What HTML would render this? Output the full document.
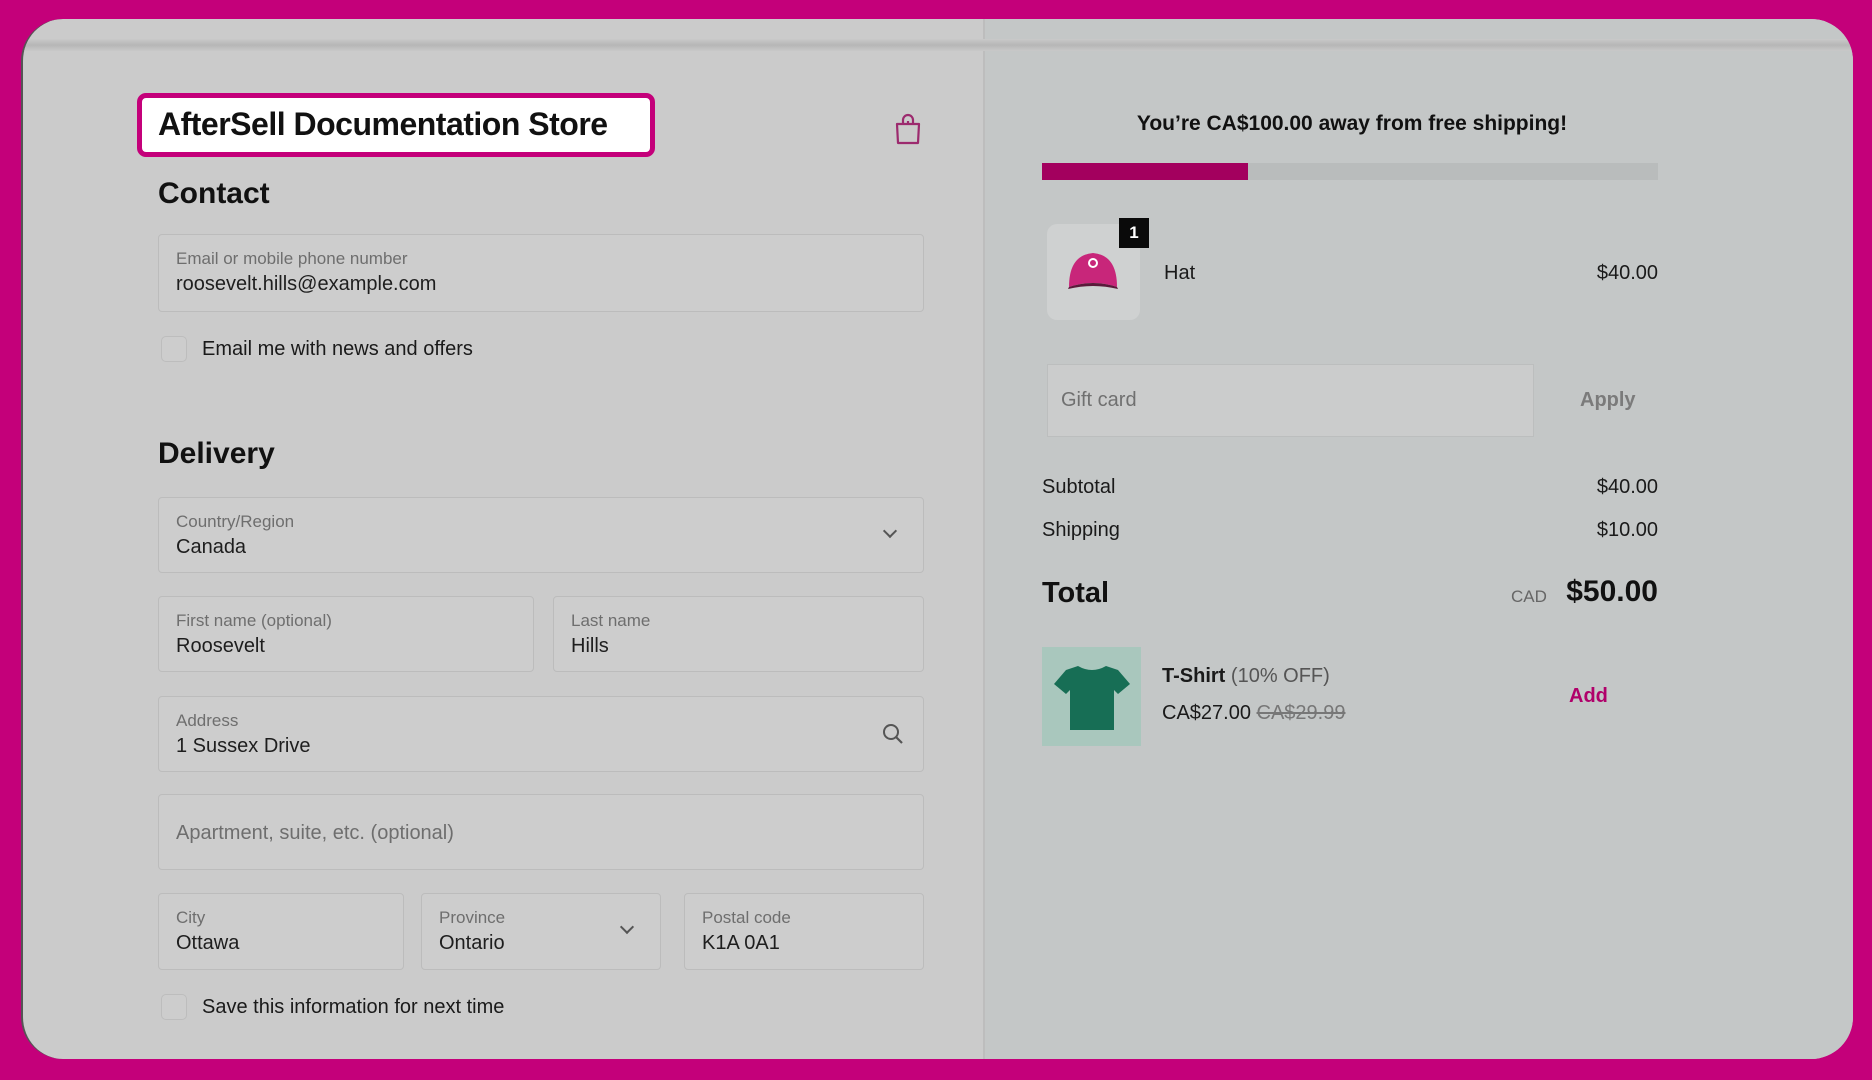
<!DOCTYPE html>
<html><head><meta charset="utf-8"><style>
*{box-sizing:border-box;margin:0;padding:0}
body{width:1872px;height:1080px;background:#c4007a;font-family:"Liberation Sans",sans-serif;position:relative;overflow:hidden;color:#1a1a1a}
.card{position:absolute;left:21px;top:19px;width:1832px;height:1040px;border-radius:42px;background:#cbcbcb;overflow:hidden;border-left:2px solid #555}
.right{position:absolute;left:960px;top:0;right:0;bottom:0;background:#c4c7c7;border-left:2px solid #bdbdbd}
.topbar{position:absolute;left:0;right:0;top:20px;height:12px;background:linear-gradient(#c9c9c9,#b6b6b6,#c9c9c9)}
.a{position:absolute}
.field{position:absolute;border:1.5px solid #bcbcbc;background:#cdcdcd;border-radius:4px}
.lab{position:absolute;left:17px;top:14px;font-size:17px;color:#6e6e6e}
.val{position:absolute;left:17px;top:38px;font-size:20px;color:#1e1e1e}
.chev{position:absolute;width:10px;height:10px;border-right:2px solid #555;border-bottom:2px solid #555;transform:rotate(45deg)}
.cb{position:absolute;width:26px;height:26px;border:1.5px solid #bdbdbd;border-radius:5px;background:#cdcdcd}
.t20{font-size:20px}
</style></head><body>
<div class="card">
<div class="right"></div>
<div class="topbar"></div>
<div class="a" style="left:114px;top:74px;width:518px;height:64px;background:#fff;border:5px solid #c4007a;border-radius:9px"></div>
<div class="a" style="left:135px;top:87px;font-size:32px;font-weight:bold;letter-spacing:-0.5px;color:#111">AfterSell Documentation Store</div>
<svg class="a" style="left:871px;top:93px" width="28" height="34" viewBox="0 0 28 34"><path d="M3 12h22l-1 19H4z M9 12V8a5 5 0 0 1 10 0v4 M14 9v4" fill="none" stroke="#9c2a6e" stroke-width="2.2" stroke-linejoin="round"/></svg>
<div class="a" style="left:135px;top:158px;font-size:30px;font-weight:bold;color:#111">Contact</div>
<div class="field" style="left:135px;top:215px;width:766px;height:78px"><div class="lab">Email or mobile phone number</div><div class="val">roosevelt.hills@example.com</div></div>
<div class="cb" style="left:138px;top:317px"></div>
<div class="a t20" style="left:179px;top:319px">Email me with news and offers</div>
<div class="a" style="left:135px;top:418px;font-size:30px;font-weight:bold;color:#111">Delivery</div>
<div class="field" style="left:135px;top:478px;width:766px;height:76px"><div class="lab">Country/Region</div><div class="val">Canada</div><div class="chev" style="right:28px;top:28px"></div></div>
<div class="field" style="left:135px;top:577px;width:376px;height:76px"><div class="lab">First name (optional)</div><div class="val">Roosevelt</div></div>
<div class="field" style="left:530px;top:577px;width:371px;height:76px"><div class="lab">Last name</div><div class="val">Hills</div></div>
<div class="field" style="left:135px;top:677px;width:766px;height:76px"><div class="lab">Address</div><div class="val">1 Sussex Drive</div>
<svg class="a" style="right:18px;top:25px" width="24" height="24" viewBox="0 0 24 24"><circle cx="10" cy="10" r="7" fill="none" stroke="#555" stroke-width="2"/><path d="M15 15l6 6" stroke="#555" stroke-width="2.2"/></svg></div>
<div class="field" style="left:135px;top:775px;width:766px;height:76px"><div class="val" style="top:27px;color:#6e6e6e">Apartment, suite, etc. (optional)</div></div>
<div class="field" style="left:135px;top:874px;width:246px;height:77px"><div class="lab">City</div><div class="val">Ottawa</div></div>
<div class="field" style="left:398px;top:874px;width:240px;height:77px"><div class="lab">Province</div><div class="val">Ontario</div><div class="chev" style="right:28px;top:28px"></div></div>
<div class="field" style="left:661px;top:874px;width:240px;height:77px"><div class="lab">Postal code</div><div class="val">K1A 0A1</div></div>
<div class="cb" style="left:138px;top:975px"></div>
<div class="a t20" style="left:179px;top:977px">Save this information for next time</div>

<!-- right -->
<div class="a" style="left:1019px;top:93px;width:620px;text-align:center;font-size:21px;font-weight:bold;color:#111">You’re CA$100.00 away from free shipping!</div>
<div class="a" style="left:1019px;top:144px;width:616px;height:17px;background:#b9bcbc"></div>
<div class="a" style="left:1019px;top:144px;width:206px;height:17px;background:#a3005e"></div>
<div class="a" style="left:1024px;top:205px;width:93px;height:96px;background:#cfd1d1;border-radius:10px"></div>
<svg class="a" style="left:1038px;top:230px" width="64" height="44" viewBox="0 0 64 44"><path d="M8 38 Q8 6 32 4 Q56 6 56 38 Q32 30 8 38z" fill="#c8267a"/><path d="M8 38 Q32 30 56 38 L57 40 Q32 34 7 40z" fill="#5a1a3a"/><circle cx="32" cy="14" r="4" fill="none" stroke="#fff" stroke-width="2"/></svg>
<div class="a" style="left:1096px;top:199px;width:30px;height:30px;background:#0a0a0a;color:#fff;font-size:17px;font-weight:bold;text-align:center;line-height:30px">1</div>
<div class="a t20" style="left:1141px;top:243px">Hat</div>
<div class="a t20" style="left:1435px;top:243px;width:200px;text-align:right">$40.00</div>
<div class="a" style="left:1024px;top:345px;width:487px;height:73px;background:#cbcccc;border:1.5px solid #bcbebe"></div>
<div class="a t20" style="left:1038px;top:370px;color:#707070">Gift card</div>
<div class="a t20" style="left:1557px;top:370px;color:#7b7b7b;font-weight:bold">Apply</div>
<div class="a t20" style="left:1019px;top:457px">Subtotal</div>
<div class="a t20" style="left:1435px;top:457px;width:200px;text-align:right">$40.00</div>
<div class="a t20" style="left:1019px;top:500px">Shipping</div>
<div class="a t20" style="left:1435px;top:500px;width:200px;text-align:right">$10.00</div>
<div class="a" style="left:1019px;top:558px;font-size:29px;font-weight:bold;color:#111">Total</div>
<div class="a" style="left:1488px;top:568px;font-size:17px;color:#666">CAD</div>
<div class="a" style="left:1435px;top:556px;width:200px;text-align:right;font-size:30px;font-weight:bold;color:#111">$50.00</div>
<div class="a" style="left:1019px;top:628px;width:99px;height:99px;background:#a9c7bd"></div>
<svg class="a" style="left:1029px;top:643px" width="80" height="72" viewBox="0 0 80 72"><path d="M26 4 L14 8 L2 22 L14 32 L18 28 L18 68 L62 68 L62 28 L66 32 L78 22 L66 8 L54 4 Q40 12 26 4z" fill="#176e55"/></svg>
<div class="a t20" style="left:1139px;top:646px"><b>T-Shirt</b> <span style="color:#555">(10% OFF)</span></div>
<div class="a t20" style="left:1139px;top:683px">CA$27.00 <span style="color:#777;text-decoration:line-through">CA$29.99</span></div>
<div class="a t20" style="left:1546px;top:666px;color:#b0006a;font-weight:bold">Add</div>
</div>
</body></html>
